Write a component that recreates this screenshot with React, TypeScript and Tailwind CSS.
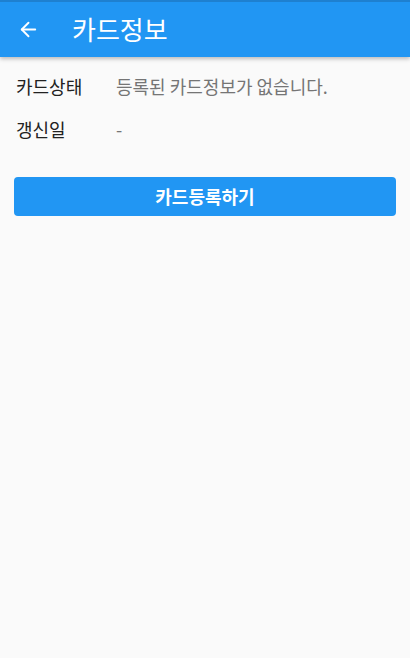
import { ArrowLeft } from "lucide-react";

export default function App() {
  const rows = [
    { label: "카드상태", value: "등록된 카드정보가 없습니다." },
    { label: "갱신일", value: "-" },
  ];

  return (
    <div
      className="w-[410px] h-[658px] bg-[#fafafa] flex flex-col"
      style={{ fontFamily: '"Noto Sans CJK KR", "Noto Sans", sans-serif' }}
    >
      <header className="h-[57px] bg-[#2196f3] border-t-2 border-[#1e80d0] flex items-center shadow-[0_2px_4px_rgba(0,0,0,0.25)] z-10">
        <button className="w-[57px] h-full flex items-center justify-center text-white">
          <ArrowLeft size={23} strokeWidth={2} className="-ml-[1px]" />
        </button>
        <h1 className="ml-[15px] text-[26px] text-white leading-none -mt-[2px]">카드정보</h1>
      </header>

      <div className="px-4 pt-[8px] flex flex-col">
        {rows.map((row) => (
          <div key={row.label} className="flex items-center h-[43px]">
            <span className="w-[100px] text-[18px] text-[#212121]">{row.label}</span>
            <span className="text-[18px] text-[#757575]">{row.value}</span>
          </div>
        ))}
      </div>

      <div className="px-[14px] mt-[26px]">
        <button className="w-full h-[39px] rounded-[4px] bg-[#2196f3] text-white text-[18px] font-bold flex items-center justify-center">
          카드등록하기
        </button>
      </div>
    </div>
  );
}
